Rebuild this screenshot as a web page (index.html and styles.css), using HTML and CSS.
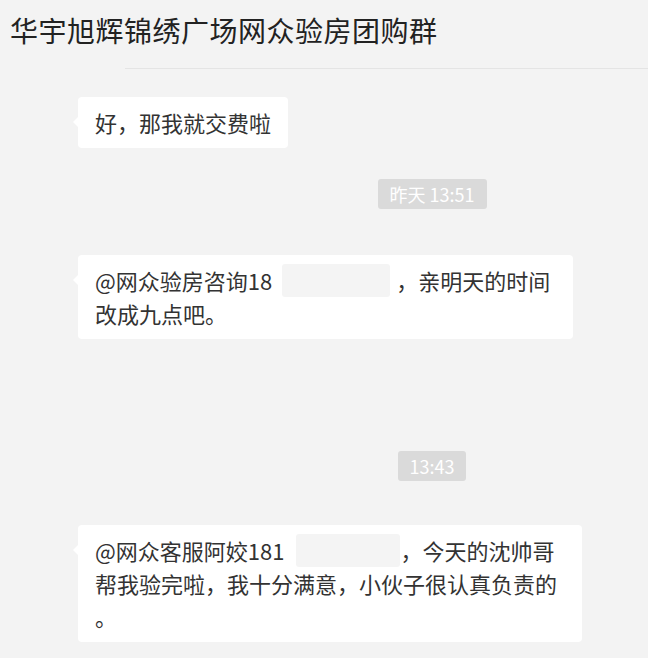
FILE: index.html
```html
<!DOCTYPE html>
<html lang="zh-CN">
<head>
    <meta charset="UTF-8">
    <meta name="viewport" content="width=device-width, initial-scale=1.0">
    <title>华宇旭辉锦绣广场网众验房团购群</title>
    <link rel="stylesheet" href="styles.css">
</head>
<body>
    <div class="chat">
        <header class="chat-header">
            <h1>华宇旭辉锦绣广场网众验房团购群</h1>
        </header>
        <div class="divider"></div>

        <div class="messages">
            <div class="msg msg-first">
                <div class="bubble">好，那我就交费啦</div>
            </div>

            <div class="time-row time-first">
                <span class="time">昨天 13:51</span>
            </div>

            <div class="msg msg-second">
                <div class="bubble bubble-wide">@网众验房咨询18<span class="hidden-num hidden-a"></span>，亲明天的时间改成九点吧。</div>
            </div>

            <div class="time-row time-second">
                <span class="time">13:43</span>
            </div>

            <div class="msg msg-third">
                <div class="bubble bubble-wider">@网众客服阿姣181<span class="hidden-num hidden-b"></span>，今天的沈帅哥帮我验完啦，我十分满意，小伙子很认真负责的。</div>
            </div>
        </div>
    </div>
</body>
</html>
```

FILE: styles.css
```css
* {
    margin: 0;
    padding: 0;
    box-sizing: border-box;
}
body {
    background: #f3f3f3;
    font-family: "Noto Sans CJK SC", "Noto Sans", sans-serif;
    color: #333;
    width: 648px;
    height: 658px;
    overflow: hidden;
}
.chat-header {
    padding: 12px 10px 0;
}
.chat-header h1 {
    font-size: 28px;
    font-weight: 400;
    line-height: 36px;
    color: #222;
    letter-spacing: 0.5px;
}
.divider {
    margin: 20px 0 0 125px;
    height: 1px;
    background: #e4e4e4;
}
.messages {
    padding-left: 78px;
}
.msg {
    display: flex;
}
.msg-first {
    margin-top: 28px;
}
.msg-second {
    margin-top: 46px;
}
.msg-third {
    margin-top: 44px;
}
.bubble {
    position: relative;
    background: #fff;
    border-radius: 4px;
    padding: 9px 17px;
    font-size: 22px;
    line-height: 33px;
    color: #333;
}
.bubble::before {
    content: "";
    position: absolute;
    left: -5px;
    top: 20px;
    border-top: 5px solid transparent;
    border-bottom: 5px solid transparent;
    border-right: 5px solid #fff;
}
.bubble-wide {
    width: 495px;
}
.bubble-wider {
    width: 504px;
    line-break: anywhere;
}
.hidden-num {
    display: inline-block;
    vertical-align: top;
    height: 33px;
    background: #f4f4f4;
    border-radius: 3px;
}
.hidden-a {
    width: 108px;
    margin: 0 6px 0 10px;
}
.hidden-b {
    width: 104px;
    margin: 0 0 0 12px;
}
.time-row {
    display: flex;
    justify-content: center;
    padding-left: 138px;
}
.time-first {
    margin-top: 31px;
}
.time-second {
    margin-top: 112px;
}
.time {
    display: inline-block;
    height: 30px;
    line-height: 30px;
    padding: 0 12px;
    background: #dadada;
    color: #fff;
    font-size: 18px;
    border-radius: 3px;
}
```
